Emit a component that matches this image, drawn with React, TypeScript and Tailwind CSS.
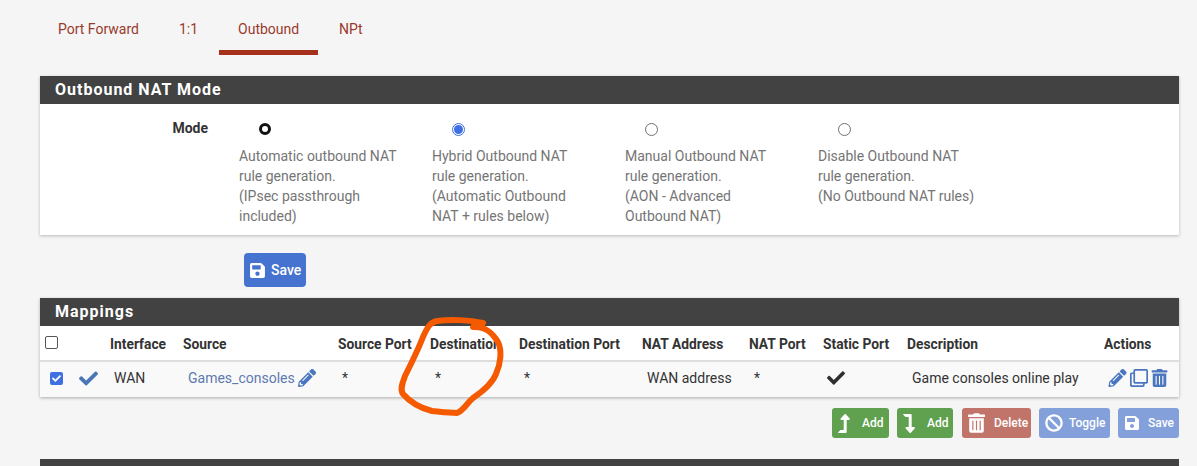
import React from "react";
import { FaSave, FaPencilAlt, FaRegClone, FaTrashAlt, FaBan, FaLevelUpAlt, FaLevelDownAlt, FaCheck } from "react-icons/fa";

const modes = [
  { on: "focus", lines: ["Automatic outbound NAT", "rule generation.", "(IPsec passthrough", "included)"] },
  { on: "checked", lines: ["Hybrid Outbound NAT", "rule generation.", "(Automatic Outbound", "NAT + rules below)"] },
  { on: "", lines: ["Manual Outbound NAT", "rule generation.", "(AON - Advanced", "Outbound NAT)"] },
  { on: "", lines: ["Disable Outbound NAT", "rule generation.", "(No Outbound NAT rules)"] },
];

function Radio({ on }: { on: string }) {
  if (on === "focus") return <span className="block w-[12px] h-[12px] rounded-full border-[3px] border-[#111] bg-white" />;
  if (on === "checked")
    return (
      <span className="flex items-center justify-center w-[13px] h-[13px] rounded-full border border-[#3f6fe0] bg-white">
        <span className="block w-[9px] h-[9px] rounded-full bg-[#3f6fe0]" />
      </span>
    );
  return <span className="block w-[13px] h-[13px] rounded-full border border-[#6f6f6f] bg-white" />;
}

const cols = "grid-cols-[70px_73px_155px_92px_89px_123px_107px_74px_84px_197px_75px]";

function Btn({ icon, label, className, width, gap }: { icon: React.ReactNode; label: string; className: string; width: string; gap: string }) {
  return (
    <div className={`flex items-center h-[30px] rounded-[3px] pl-[6px] text-white text-[12px] font-medium ${className} ${width} ${gap}`}>
      {icon}
      <span>{label}</span>
    </div>
  );
}

export default function App() {
  return (
    <div className="relative w-[1197px] h-[466px] overflow-hidden bg-[#f5f5f5] text-[14px] font-['Roboto',sans-serif] text-[#212121]">
      <div className="flex pl-[39px] h-[55px] text-[#9a3a2c] text-[14px]">
        <div className="px-[19px] pt-[19px]">Port Forward</div>
        <div className="px-[22px] pt-[19px] ml-[-1px]">1:1</div>
        <div className="w-[99px] h-[55px] ml-[-1px] pt-[19px] text-center border-b-[5px] border-[#a5301c]">Outbound</div>
        <div className="pl-[21px] pt-[19px]">NPt</div>
      </div>

      <div className="ml-[40px] mr-[18px] mt-[21px] bg-white shadow-[0_1px_3px_rgba(0,0,0,0.25)]">
        <div className="h-[28px] pl-[15px] leading-[28px] bg-[#424242] text-white text-[16px] font-bold tracking-[1px]">Outbound NAT Mode</div>
        <div className="flex h-[131px]">
          <div className="w-[168px] pt-[16px] text-right font-bold text-[#333] leading-[17px]">Mode</div>
          <div className="flex ml-[31px]">
            {modes.map((m, i) => (
              <div key={i} className="w-[193px]">
                <div className="pt-[19px] pl-[20px] h-[42px]"><Radio on={m.on} /></div>
                <div className="text-[14px] leading-[20px] text-[#757575]">
                  {m.lines.map((l) => <div key={l}>{l}</div>)}
                </div>
              </div>
            ))}
          </div>
        </div>
      </div>

      <div className="ml-[244px] mt-[18px] flex items-center gap-[5px] w-[62px] h-[34px] pl-[5px] rounded-[4px] bg-[#4673cf] text-white text-[14px] font-medium">
        <FaSave className="w-[17px] h-[17px]" />
        <span>Save</span>
      </div>

      <div className="ml-[40px] mr-[18px] mt-[11px] bg-white shadow-[0_1px_3px_rgba(0,0,0,0.3)]">
        <div className="h-[28px] pl-[15px] leading-[28px] bg-[#424242] text-white text-[16px] font-bold tracking-[1px]">Mappings</div>
        <div className={`grid ${cols} h-[36px] pt-[3px] items-center border-b-2 border-[#dedede] font-bold text-[13.8px] text-[#333] bg-white`}>
          <div className="pl-[5px] mt-[-4px]"><span className="block w-[13px] h-[13px] rounded-[2px] border border-[#555] bg-white" /></div>
          <div>Interface</div>
          <div>Source</div>
          <div>Source Port</div>
          <div>Destination</div>
          <div>Destination Port</div>
          <div>NAT Address</div>
          <div>NAT Port</div>
          <div>Static Port</div>
          <div>Description</div>
          <div>Actions</div>
        </div>
        <div className={`grid ${cols} h-[35px] pb-[3px] items-center bg-[#f9f9f9] text-[14px] text-[#333]`}>
          <div className="flex items-center">
            <span className="flex items-center justify-center ml-[10px] w-[13px] h-[13px] rounded-[2px] bg-[#3f6fe0] text-white">
              <FaCheck className="w-[9px] h-[9px]" />
            </span>
            <FaCheck className="ml-[16px] w-[19px] h-[19px] text-[#4a76b8]" />
          </div>
          <div className="pl-[4px]">WAN</div>
          <div className="pl-[5px] flex items-center text-[#5e7ab0]">
            <span>Games_consoles</span>
            <FaPencilAlt className="ml-[3px] w-[18px] h-[18px] text-[#4a76c0]" />
          </div>
          <div className="pl-[4px]">*</div>
          <div className="pl-[5px]">*</div>
          <div className="pl-[5px]">*</div>
          <div className="pl-[5px]">WAN address</div>
          <div className="pl-[5px]">*</div>
          <div className="pl-[4px]"><FaCheck className="w-[18px] h-[18px] text-[#2f2f2f]" /></div>
          <div className="pl-[5px]">Game consoles online play</div>
          <div className="pl-[4px] flex items-center text-[#4a76c0]">
            <FaPencilAlt className="w-[19px] h-[18px]" />
            <FaRegClone className="ml-[3px] w-[18px] h-[18px]" />
            <FaTrashAlt className="ml-[3px] w-[17px] h-[18px]" />
          </div>
        </div>
      </div>

      <div className="flex justify-end gap-[8px] mr-[18px] mt-[11px]">
        <Btn icon={<FaLevelUpAlt className="w-[12px] h-[19px]" />} label="Add" className="bg-[#5fa14e]" width="w-[57px]" gap="gap-[12px]" />
        <Btn icon={<FaLevelDownAlt className="w-[12px] h-[19px]" />} label="Add" className="bg-[#5fa14e] mr-[1px]" width="w-[56px]" gap="gap-[12px]" />
        <Btn icon={<FaTrashAlt className="w-[17px] h-[20px]" />} label="Delete" className="bg-[#c1756a] pl-[4px]" width="w-[69px]" gap="gap-[9px]" />
        <Btn icon={<FaBan className="w-[18px] h-[18px]" />} label="Toggle" className="bg-[#84a0db]" width="w-[71px]" gap="gap-[6px]" />
        <Btn icon={<FaSave className="w-[16px] h-[16px]" />} label="Save" className="bg-[#84a0db]" width="w-[61px]" gap="gap-[8px]" />
      </div>

      <div className="ml-[40px] mr-[18px] mt-[21px] h-[30px] bg-[#424242]" />

      <svg className="absolute left-0 top-0 pointer-events-none" width="1197" height="466" fill="none">
        <path
          d="M483 323 C470 320 450 319 437 321 C430 322 427 328 423 337 C418 350 412 362 405 376 C402 384 400 390 403 394 C410 402 420 408 432 411 C442 412 450 413 457 413 C463 411 467 403 473 398 C483 391 492 384 496 374 C501 363 502 350 498 342 C492 332 485 326 473 327"
          stroke="#f55a00"
          strokeWidth="6"
          strokeLinecap="round"
        />
      </svg>
    </div>
  );
}
